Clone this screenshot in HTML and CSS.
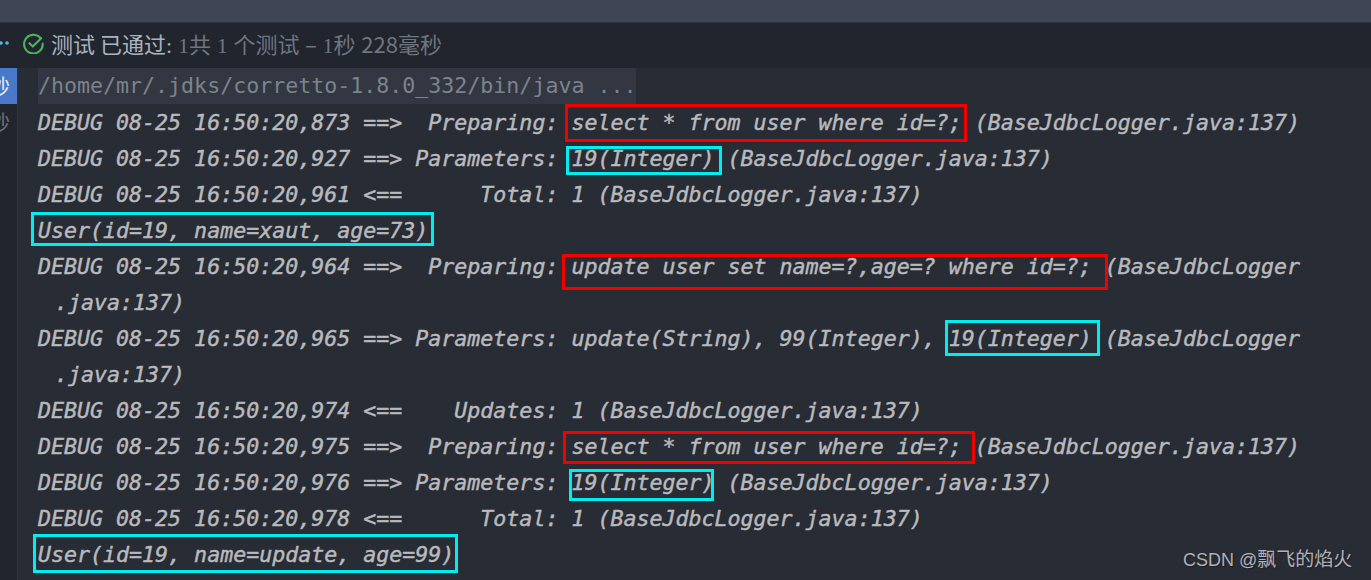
FILE: index.html
```html
<!DOCTYPE html>
<html lang="zh">
<head>
<meta charset="utf-8">
<title>测试</title>
<link rel="stylesheet" href="styles.css">
</head>
<body>
<div class="app">
  <div class="topbar"></div>
  <div class="toolbar">
    <span class="dots">
      <svg width="10" height="4" viewBox="0 0 10 4"><circle cx="1" cy="2" r="1.8" fill="#5ab4e6"/><circle cx="7" cy="2" r="1.8" fill="#5ab4e6"/></svg>
    </span>
    <svg class="check" width="21" height="21" viewBox="0 0 21 21" fill="none"><path d="M17.6 5.2A9.3 9.3 0 1 0 19.7 10.5" stroke="#4eb35a" stroke-width="2.1" stroke-linecap="round"/><path d="M6.4 10.2l3.4 3.4 8.4-8.4" stroke="#4eb35a" stroke-width="2.1" stroke-linecap="round" stroke-linejoin="round"/></svg>
    <span class="status">测试 已通过<span class="colon">:</span></span>
    <span class="summary"><span class="num">1</span>共 <span class="num">1</span> 个测试 – <span class="num">1</span>秒 228毫秒</span>
  </div>
  <div class="main">
    <div class="tree">
      <div class="tree-row selected">秒</div>
      <div class="tree-row">秒</div>
    </div>
    <div class="console">
      <div class="line cmd"><span class="cmd-text">/home/mr/.jdks/corretto-1.8.0_332/bin/java ...</span></div>
      <div class="line">DEBUG 08-25 16:50:20,873 ==&gt;  Preparing: select * from user where id=?; (BaseJdbcLogger.java:137)</div>
      <div class="line">DEBUG 08-25 16:50:20,927 ==&gt; Parameters: 19(Integer) (BaseJdbcLogger.java:137)</div>
      <div class="line">DEBUG 08-25 16:50:20,961 &lt;==      Total: 1 (BaseJdbcLogger.java:137)</div>
      <div class="line">User(id=19, name=xaut, age=73)</div>
      <div class="line">DEBUG 08-25 16:50:20,964 ==&gt;  Preparing: update user set name=?,age=? where id=?; (BaseJdbcLogger</div>
      <div class="line wrap">.java:137)</div>
      <div class="line">DEBUG 08-25 16:50:20,965 ==&gt; Parameters: update(String), 99(Integer), 19(Integer) (BaseJdbcLogger</div>
      <div class="line wrap">.java:137)</div>
      <div class="line">DEBUG 08-25 16:50:20,974 &lt;==    Updates: 1 (BaseJdbcLogger.java:137)</div>
      <div class="line">DEBUG 08-25 16:50:20,975 ==&gt;  Preparing: select * from user where id=?; (BaseJdbcLogger.java:137)</div>
      <div class="line">DEBUG 08-25 16:50:20,976 ==&gt; Parameters: 19(Integer) (BaseJdbcLogger.java:137)</div>
      <div class="line">DEBUG 08-25 16:50:20,978 &lt;==      Total: 1 (BaseJdbcLogger.java:137)</div>
      <div class="line">User(id=19, name=update, age=99)</div>
    </div>
  </div>
  <div class="mark red m1"></div>
  <div class="mark cyan m2"></div>
  <div class="mark cyan m3"></div>
  <div class="mark red m4"></div>
  <div class="mark cyan m5"></div>
  <div class="mark red m6"></div>
  <div class="mark cyan m7"></div>
  <div class="mark cyan m8"></div>
  <div class="watermark">CSDN @<span class="wm-cjk">飘飞的焰火</span></div>
</div>
</body>
</html>
```
FILE: styles.css
```css
* { box-sizing: border-box; }
html, body { margin: 0; padding: 0; }
body { background: #282c35; overflow: hidden; }
.app { position: relative; width: 1371px; height: 580px; overflow: hidden; display: flex; flex-direction: column; background: #282c35; }
.topbar { height: 23px; background: #3f4554; border-bottom: 1px solid #2f333d; flex: none; }
.toolbar { height: 45px; flex: none; padding-bottom: 5px; background: #21252d; display: flex; align-items: center; font-family: "Noto Sans CJK SC", "Noto Sans", sans-serif; font-size: 22px; white-space: pre; }
.dots { width: 23px; display: flex; align-items: center; }
.check { flex: none; margin-right: 7px; }
.status { color: #aab3c0; margin-right: 6px; }
.colon { font-family: "Liberation Serif", serif; }
.summary { color: #6f7680; word-spacing: 0.75px; }
.num { font-family: "Liberation Serif", serif; }
.main { flex: 1; display: flex; min-height: 0; }
.tree { width: 18px; flex: none; background: #21252d; border-right: 1px solid #2f333b; font-family: "Noto Sans CJK SC", sans-serif; font-size: 21px; overflow: hidden; }
.tree-row { height: 36px; line-height: 35px; color: #6c727c; text-indent: -11px; white-space: nowrap; }
.tree-row.selected { background: #4a78c8; color: #e8edf5; }
.console { flex: 1; padding-left: 20px; font-family: "DejaVu Sans Mono", monospace; font-size: 21.62px; color: #b8babd; min-width: 0; }
.line { height: 36px; line-height: 38px; font-style: italic; white-space: pre; -webkit-text-stroke: 0.45px currentColor; }
.line.cmd { font-style: normal; line-height: 36px; color: #7d838c; -webkit-text-stroke: 0; }
.cmd-text { display: inline-block; height: 36px; background: #323742; }
.line.wrap { padding-left: 17px; }
.mark { position: absolute; border: 3px solid; }
.red { border-color: #f50000; }
.cyan { border-color: #00eef0; }
.m1 { left: 565px; top: 104px; width: 402px; height: 38px; }
.m2 { left: 566px; top: 146px; width: 156px; height: 29px; }
.m3 { left: 31px; top: 212px; width: 403px; height: 34px; }
.m4 { left: 562px; top: 254px; width: 546px; height: 36px; }
.m5 { left: 945px; top: 320px; width: 155px; height: 36px; }
.m6 { left: 563px; top: 431px; width: 412px; height: 33px; }
.m7 { left: 569px; top: 469px; width: 145px; height: 32px; }
.m8 { left: 33px; top: 534px; width: 425px; height: 39px; }
.watermark { position: absolute; left: 1183px; top: 548px; font-family: "Liberation Sans", "Noto Sans CJK SC", sans-serif; font-size: 18px; line-height: 24px; color: #b0b2b5; white-space: nowrap; text-shadow: 1px 1px 1px #1c1f26; }
.wm-cjk { font-size: 19px; }
```
